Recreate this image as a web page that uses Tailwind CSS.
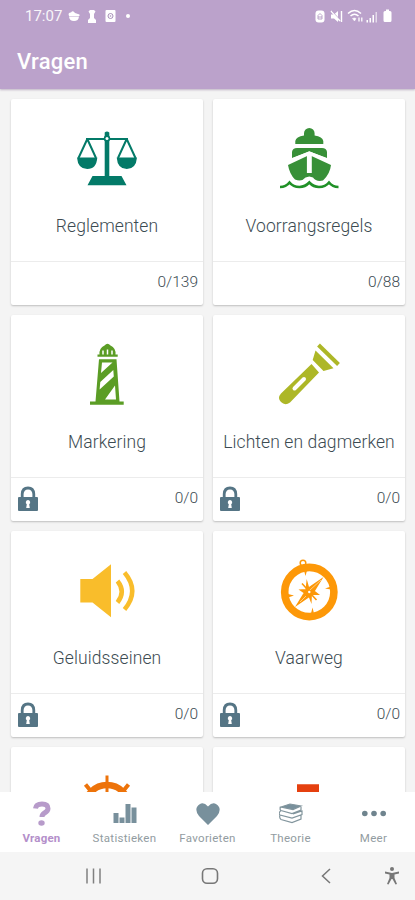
<!DOCTYPE html>
<html lang="nl">
<head>
<meta charset="utf-8">
<title>Vragen</title>
<script src="https://cdn.jsdelivr.net/npm/@tailwindcss/browser@4"></script>
</head>
<body class="w-[415px] h-[900px] overflow-hidden flex flex-col bg-[#f4f4f4] font-['Roboto',sans-serif]">
<header class="relative z-10 h-[89px] shrink-0 bg-[#bba2cb] text-white shadow-[0_1px_2px_rgba(90,60,110,0.35)]">
  <div class="h-8 pl-[25px] pr-[23px] flex items-center justify-between">
    <div class="flex items-center">
      <span class="text-[15px] leading-none w-[37px] opacity-90">17:07</span>
      <svg class="ml-[6px] w-[12px] h-[12px]" viewBox="0 0 12 12" fill="white"><path d="M0.500 4Q1 2 3 2.500Q5 0 7 3L11.500 4.500V6H1ZM1 6.500H11Q10.500 11 6 11T1 6.500Z"/></svg>
      <svg class="ml-[7px] w-[10px] h-[14px]" viewBox="0 0 10 14" fill="white"><path d="M3 1h4l1.500 1.500L7 5v4l2 2v3H1v-3l2-2V5L1.500 2.500Z"/></svg>
      <svg class="ml-[8px] w-[11px] h-[14px]" viewBox="0 0 11 14"><rect x="0.500" y="1" width="10" height="12" rx="1" fill="white"/><circle cx="5.500" cy="7" r="2.500" fill="none" stroke="#a78fb8" stroke-width="1"/><circle cx="5.500" cy="7" r="0.800" fill="#a78fb8"/></svg>
      <span class="ml-[10px] w-[4px] h-[4px] rounded-full bg-white"></span>
    </div>
    <div class="flex items-center">
      <svg class="w-[10px] h-[13px]" viewBox="0 0 10 13"><rect x="0.500" y="0.500" width="9" height="12" rx="3" fill="white"/><path d="M3 5.500L5 3.500L7 5.500V9H3ZM3 7H7" fill="none" stroke="#b39bc4" stroke-width="0.900"/></svg>
      <svg class="ml-[5px] w-[13px] h-[13px]" viewBox="0 0 13 13"><path d="M1 4.500H4L8 1V12L4 8.500H1Z" fill="white"/><path d="M1 1L10 11M11.500 1V12" stroke="white" stroke-width="1.400"/><path d="M2 1L9 8.500" stroke="#bba2cb" stroke-width="0.700"/></svg>
      <svg class="ml-[4px] w-[17px] h-[14px]" viewBox="0 0 17 14" fill="none" stroke="white"><path d="M1 4.500Q7.500-1.500 14 4.500M3.500 7Q7.500 3.500 11.500 7" stroke-width="1.600"/><path d="M5.500 9.500L7.500 12L9 9.500Q7.500 8.500 5.500 9.500Z" fill="white" stroke-width="0.500"/><path d="M12 8.500V12.500M14.800 8.500V12.500" stroke-width="1.300"/></svg>
      <svg class="ml-[2px] w-[12px] h-[13px]" viewBox="0 0 12 13" fill="white"><path d="M0.500 10h1.500v2.500h-1.500zM3.500 8h1.500v4.500h-1.500zM6.500 5h1.500v7.500h-1.500z"/><path opacity=".6" d="M9.500 2h1.500v10.500h-1.500z"/></svg>
      <svg class="ml-[5px] w-[9px] h-[14px]" viewBox="0 0 9 14" fill="white"><path d="M3 0.500h3v1.500h1q1.500 0 1.500 1.500v8q0 1.500-1.500 1.500h-5q-1.500 0-1.500-1.500v-8q0-1.500 1.500-1.500h1z"/></svg>
    </div>
  </div>
  <h1 class="pl-[17px] pt-[14px] text-[22px] leading-[32px] font-medium tracking-[0.2px]">Vragen</h1>
</header>

<main class="flex-1 min-h-0 overflow-hidden px-[11px] pt-[10px] grid grid-cols-[192px_192px] gap-[10px] auto-rows-[206px] content-start text-[#3c4b52]">
  <section class="bg-white rounded-[2px] shadow-[0_1px_2px_rgba(0,0,0,0.22)] flex flex-col">
    <div class="h-[163px] border-b border-[#ececec] flex flex-col items-center pt-[27px]">
      <svg class="w-16 h-16" viewBox="0 0 64 64" fill="#037a68"><path d="M29.700 10V6.500Q32 4.500 34.300 6.500V51H29.700Z"/><path d="M11 13H53M12.300 13L3.500 32M12.300 13L21 32M51.700 13L43 32M51.700 13L60.500 32" fill="none" stroke="#037a68" stroke-width="2"/><path d="M2 31.500H22.300Q21.500 43 12.200 43T2 31.500ZM41.700 31.500H62Q61 43 51.800 43T41.700 31.500ZM17.500 50H46.500L51.500 59.300H12.500Z"/><circle cx="32" cy="12.500" r="3.200"/><circle cx="32" cy="12.500" r="1.500" fill="white"/></svg>
      <h2 class="mt-[26px] text-[17.5px] leading-[20px] tracking-[0.1px] whitespace-nowrap font-light">Reglementen</h2>
    </div>
    <div class="flex-1 flex items-center justify-end pl-[7px] pr-[5px] pb-[1px] text-[15.5px] font-light">0/139</div>
  </section>

  <section class="bg-white rounded-[2px] shadow-[0_1px_2px_rgba(0,0,0,0.22)] flex flex-col">
    <div class="h-[163px] border-b border-[#ececec] flex flex-col items-center pt-[27px]">
      <svg class="w-16 h-16" viewBox="0 0 64 64" fill="#389038"><path d="M18.300 18V15Q19 10.500 27 9.500V7.300A5.300 5.300 0 0 1 37.600 7.300V9.500Q45.500 10.500 46.300 15V18ZM15 32V26Q15.500 22 20 22H45Q49.500 22 50 26V32L32.300 25.500ZM11 39L32.300 29L54 39Q53 48 46 54.500Q39 56 36 51.500L32.300 50.500L28.500 51.500Q25 56 18 53.500Q12.500 48 11 39Z"/><path d="M12 35L32.300 26.500L53 35" fill="none" stroke="white" stroke-width="2.500"/><path d="M29.900 29H34.800V47H29.900Z" fill="white"/><path d="M3 61Q9 61 12.500 56.500Q16 61 22.500 61Q28 61 32.300 56.500Q36.500 61 42 61Q48.500 61 52 56.500Q55.500 61 61.500 61" fill="none" stroke="#209127" stroke-width="2.600"/></svg>
      <h2 class="mt-[26px] text-[17.5px] leading-[20px] tracking-[0.1px] whitespace-nowrap font-light">Voorrangsregels</h2>
    </div>
    <div class="flex-1 flex items-center justify-end pl-[7px] pr-[5px] pb-[1px] text-[15.5px] font-light">0/88</div>
  </section>

  <section class="bg-white rounded-[2px] shadow-[0_1px_2px_rgba(0,0,0,0.22)] flex flex-col">
    <div class="h-[163px] border-b border-[#ececec] flex flex-col items-center pt-[27px]">
      <svg class="w-16 h-16" viewBox="0 0 64 64" fill="#5b9d25"><path d="M22.500 14.700V12.500H24.500Q24 6 29.500 3.500Q32.500 0 35.500 3.500Q41 6 40.500 12.500H42.700V14.700Z"/><path d="M28 8.500V12.500M32.500 7.500V12.500M37 8.500V12.500" stroke="white" stroke-width="1.500"/><path d="M24 17.300H41.500L44.500 59.500H48.700V62.700H15V59.500H20.500Z"/><path d="M27 20.500H37.500L26 31ZM38.300 28L38.800 34.500L24.600 47.500L25.300 40ZM40 43.500L41 57.500H30Z" fill="white"/></svg>
      <h2 class="mt-[26px] text-[17.5px] leading-[20px] tracking-[0.1px] whitespace-nowrap font-light">Markering</h2>
    </div>
    <div class="flex-1 flex items-center justify-between pl-[7px] pr-[5px] pb-[1px] text-[15.5px] font-light"><svg class="w-5 h-[26px] -mt-[1px]" viewBox="0 0 20 26"><path d="M4.200 12V8Q4.500 2 10 2T15.800 8V12" fill="none" stroke="#557585" stroke-width="2.800"/><rect x="0" y="11" width="20" height="14" rx="1" fill="#557585"/><path d="M10 14a2.300 2.300 0 0 1 1.200 4.200L11.800 22H8.200L8.800 18.200A2.300 2.300 0 0 1 10 14Z" fill="white"/></svg>0/0</div>
  </section>

  <section class="bg-white rounded-[2px] shadow-[0_1px_2px_rgba(0,0,0,0.22)] flex flex-col">
    <div class="h-[163px] border-b border-[#ececec] flex flex-col items-center pt-[27px]">
      <svg class="w-16 h-16" viewBox="0 0 64 64" fill="#adb727"><path d="M41.500 3L61.500 22.500" stroke="#adb727" stroke-width="4"/><path d="M38.500 8.500L56.500 26.300L46.500 29L35.700 18ZM34.500 22L42 30.500L13 60.500Q8 64 4 60Q0 56 4 51.500Z"/><path d="M27 37L17.500 46.500" stroke="white" stroke-width="4" stroke-linecap="round"/></svg>
      <h2 class="mt-[26px] text-[17.5px] leading-[20px] tracking-[0.1px] whitespace-nowrap font-light">Lichten en dagmerken</h2>
    </div>
    <div class="flex-1 flex items-center justify-between pl-[7px] pr-[5px] pb-[1px] text-[15.5px] font-light"><svg class="w-5 h-[26px] -mt-[1px]" viewBox="0 0 20 26"><path d="M4.200 12V8Q4.500 2 10 2T15.800 8V12" fill="none" stroke="#557585" stroke-width="2.800"/><rect x="0" y="11" width="20" height="14" rx="1" fill="#557585"/><path d="M10 14a2.300 2.300 0 0 1 1.200 4.200L11.800 22H8.200L8.800 18.200A2.300 2.300 0 0 1 10 14Z" fill="white"/></svg>0/0</div>
  </section>

  <section class="bg-white rounded-[2px] shadow-[0_1px_2px_rgba(0,0,0,0.22)] flex flex-col">
    <div class="h-[163px] border-b border-[#ececec] flex flex-col items-center pt-[27px]">
      <svg class="w-16 h-16" viewBox="0 0 64 64" fill="#f9bd2b"><path d="M5.300 21H17.500L36 6.300V59.300L17.500 44.500H5.300Z"/><path d="M42.500 23Q51 33.700 42.500 44.500M49.500 14.500Q65 33 49.500 51.500" fill="none" stroke="#f9bd2b" stroke-width="4.500"/></svg>
      <h2 class="mt-[26px] text-[17.5px] leading-[20px] tracking-[0.1px] whitespace-nowrap font-light">Geluidsseinen</h2>
    </div>
    <div class="flex-1 flex items-center justify-between pl-[7px] pr-[5px] pb-[1px] text-[15.5px] font-light"><svg class="w-5 h-[26px] -mt-[1px]" viewBox="0 0 20 26"><path d="M4.200 12V8Q4.500 2 10 2T15.800 8V12" fill="none" stroke="#557585" stroke-width="2.800"/><rect x="0" y="11" width="20" height="14" rx="1" fill="#557585"/><path d="M10 14a2.300 2.300 0 0 1 1.200 4.200L11.800 22H8.200L8.800 18.200A2.300 2.300 0 0 1 10 14Z" fill="white"/></svg>0/0</div>
  </section>

  <section class="bg-white rounded-[2px] shadow-[0_1px_2px_rgba(0,0,0,0.22)] flex flex-col">
    <div class="h-[163px] border-b border-[#ececec] flex flex-col items-center pt-[27px]">
      <svg class="w-16 h-16" viewBox="0 0 64 64" fill="#fd9808"><circle cx="32.300" cy="34" r="24.600" fill="none" stroke="#fd9808" stroke-width="7.600"/><circle cx="26" cy="5" r="2.800" fill="none" stroke="#fd9808" stroke-width="1.500"/><path d="M27 12.500L28.500 18L30 12.500ZM34 55.500L35.500 49.500L37 55.500ZM11 36L17 37.500L11 39.500ZM54 28.500L48 30.500L54 31.500Z"/><path d="M46.500 19L35.500 37L18 49L29 31ZM29.700 21L32 29L33 38L28 36ZM43 37L35 37L30 33L36 31.500ZM34.500 46L31 37L35 35ZM21.500 31.500L29 31L32 34L28 36Z"/><path d="M25 25.500L30 31M39.500 27.500L35 32M24.500 41L30 36M39.500 42L34 36" stroke="#fd9808" stroke-width="1.600"/><path d="M44 22L33 32M29 38L23 44" stroke="white" stroke-width="0.500"/><circle cx="32.300" cy="34" r="1.200" fill="white"/></svg>
      <h2 class="mt-[26px] text-[17.5px] leading-[20px] tracking-[0.1px] whitespace-nowrap font-light">Vaarweg</h2>
    </div>
    <div class="flex-1 flex items-center justify-between pl-[7px] pr-[5px] pb-[1px] text-[15.5px] font-light"><svg class="w-5 h-[26px] -mt-[1px]" viewBox="0 0 20 26"><path d="M4.200 12V8Q4.500 2 10 2T15.800 8V12" fill="none" stroke="#557585" stroke-width="2.800"/><rect x="0" y="11" width="20" height="14" rx="1" fill="#557585"/><path d="M10 14a2.300 2.300 0 0 1 1.200 4.200L11.800 22H8.200L8.800 18.200A2.300 2.300 0 0 1 10 14Z" fill="white"/></svg>0/0</div>
  </section>

  <section class="bg-white rounded-[2px] shadow-[0_1px_2px_rgba(0,0,0,0.22)] flex flex-col items-center pt-[27px]">
    <svg class="w-16 h-16" viewBox="0 0 64 64" fill="none" stroke="#ed730a"><circle cx="32" cy="33" r="22" stroke-width="6.500"/><path d="M32 1.500V62" stroke-width="3"/><path d="M10.500 10.500L15 16H21M53.500 10.500L49 16H43" stroke-width="4"/></svg>
  </section>
  <section class="bg-white rounded-[2px] shadow-[0_1px_2px_rgba(0,0,0,0.22)] flex flex-col items-center pt-[27px]">
    <svg class="w-16 h-16" viewBox="0 0 64 64" fill="#e5400f"><path d="M20 10.300H42V60H20Z"/></svg>
  </section>
</main>

<nav class="h-[60px] shrink-0 bg-white grid grid-cols-5 text-[11.5px] leading-[14px] text-[#929ca1]">
  <div class="flex flex-col items-center pt-[9px] text-[#b48fca] font-bold">
    <svg class="w-6 h-[26px]" viewBox="0 0 24 26" fill="none" stroke="#b79bca"><path d="M5.500 7.500Q6 3 12 3T18 7.500Q18 10 14.500 12Q12 13.500 12 16" stroke-width="5"/><ellipse cx="11.500" cy="22" rx="3.200" ry="2.800" fill="#b79bca" stroke="none"/></svg>
    <span class="mt-[4px] tracking-[0.2px]">Vragen</span>
  </div>
  <div class="flex flex-col items-center pt-[10px]">
    <svg class="w-6 h-[26px]" viewBox="0 0 24 26" fill="#78909c"><path d="M0.500 11h5v10h-5zM6.500 15.500h5v5.500h-5zM12.500 2h5v19h-5zM18.500 5.500h5v15.500h-5z"/></svg>
    <span class="mt-[3px] tracking-[0.3px]">Statistieken</span>
  </div>
  <div class="flex flex-col items-center pt-[10px]">
    <svg class="w-6 h-[26px]" viewBox="0 0 24 26" fill="#78909c"><path d="M12 23L3 14Q-1 9 1 5Q6-2 12 4.500Q18-2 23 5Q25 9 21 14Z"/></svg>
    <span class="mt-[3px] tracking-[0.3px]">Favorieten</span>
  </div>
  <div class="flex flex-col items-center pt-[10px]">
    <svg class="w-6 h-[26px]" viewBox="0 0 24 26" fill="none" stroke="#82959d" stroke-width="1.200"><path d="M2 5L11 2L22 4L14 7.500Z" fill="#78909c"/><path d="M2 5Q0 7 2 8.500L13 11.500L22 8V5M2 8.500Q-1 11 1 13L13 16L23 12.500V9L14 12M1 13Q0 16 2 17.500L13 20.500L22 17V13"/></svg>
    <span class="mt-[3px] tracking-[0.3px]">Theorie</span>
  </div>
  <div class="flex flex-col items-center pt-[9px]">
    <svg class="w-6 h-[26px]" viewBox="0 0 24 26" fill="#6f848e"><circle cx="2.800" cy="12.500" r="2.800"/><circle cx="12" cy="12.500" r="2.800"/><circle cx="21.200" cy="12.500" r="2.800"/></svg>
    <span class="mt-[4px] tracking-[0.3px]">Meer</span>
  </div>
</nav>

<footer class="h-12 shrink-0 bg-[#f5f5f5] flex items-center pl-[85px] pr-[15px]">
  <svg class="w-4 h-4" viewBox="0 0 16 16" stroke="#808080" stroke-width="1.500"><path d="M2 0.500V15.500M8.500 0.500V15.500M15 0.500V15.500"/></svg>
  <svg class="ml-[100px] w-[18px] h-[18px]" viewBox="0 0 18 18" fill="none" stroke="#777" stroke-width="1.600"><rect x="1.500" y="1.800" width="15" height="14.500" rx="4.500"/></svg>
  <svg class="ml-[102px] w-[10px] h-4" viewBox="0 0 10 16" fill="none" stroke="#777" stroke-width="1.500"><path d="M9 1L1.500 8L9 15"/></svg>
  <svg class="ml-auto w-4 h-[18px]" viewBox="0 0 16 18" fill="#777"><circle cx="8" cy="2" r="2"/><path d="M1 4.500L8 6L15 4.500V6.500L10.500 7.500V11L13 17L11.500 17.500L8.500 12H7.500L4.500 17.500L3 17L5.500 11V7.500L1 6.500Z"/></svg>
</footer>
</body>
</html>
